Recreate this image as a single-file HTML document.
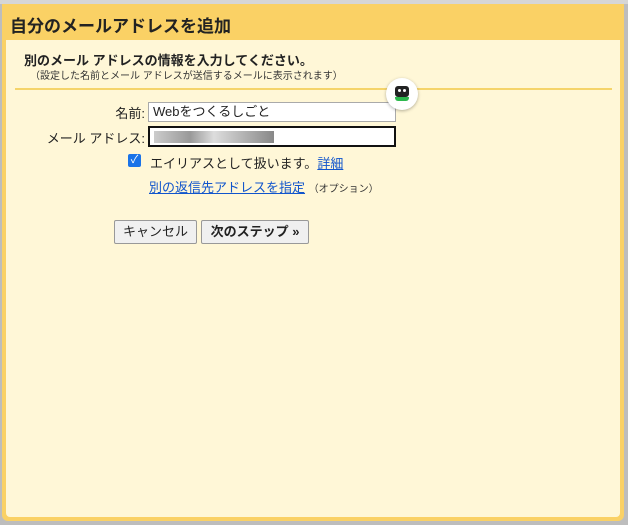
<!DOCTYPE html>
<html><head><meta charset="utf-8"><style>
body{margin:0;width:628px;height:525px;background:#bdbdbd;position:relative;overflow:hidden;font-family:"Liberation Sans","Noto Sans CJK JP",sans-serif;color:#222}
.top{position:absolute;left:0;top:0;width:628px;height:4px;background:#d6d6d6}
.dlg{position:absolute;left:2px;top:4px;width:622px;height:517px;background:#fad165;border-radius:0 0 6px 6px}
.in{position:absolute;left:4px;top:36px;width:614px;height:477px;background:#fff7d7;border-radius:0 0 4px 4px}
.h{position:absolute;left:10px;top:12px;font-size:17px;font-weight:bold;color:#222}
.t1{position:absolute;left:24px;top:50px;font-size:13px;font-weight:bold}
.t2{position:absolute;left:30px;top:67px;font-size:10px;color:#333}
.hr{position:absolute;left:15px;top:88px;width:597px;height:2px;background:#f5d46a}
.lbl{position:absolute;font-size:13px;text-align:right;width:145px;left:0}
.inp{position:absolute;left:148px;width:242px;height:18px;background:#fff;border:1px solid #aaa;font-size:13px;line-height:18px;padding-left:4px;box-sizing:content-box}
a{color:#15c;text-decoration:underline}
.btn{position:absolute;top:220px;height:22px;border:1px solid #999;border-radius:2px;background:#f0f0f0;font-size:13px;line-height:22px;text-align:center}
</style></head><body>
<div class="top"></div>
<div class="dlg"><div class="in"></div></div>
<div class="h">自分のメールアドレスを追加</div>
<div class="t1">別のメール アドレスの情報を入力してください。</div>
<div class="t2">（設定した名前とメール アドレスが送信するメールに表示されます）</div>
<div class="hr"></div>
<div class="lbl" style="top:103px">名前:</div>
<div class="inp" style="top:102px;">Webをつくるしごと</div>
<div class="lbl" style="top:128px">メール アドレス:</div>
<div class="inp" style="top:126px;border:2px solid #111;width:240px;height:17px;left:148px"><span style="display:inline-block;width:120px;height:12px;margin-top:3px;background:linear-gradient(90deg,#ccc,#999 30%,#ddd 50%,#bbb 70%,#888)"></span></div>
<div style="position:absolute;left:128px;top:154px;width:13px;height:13px;background:#1a73e8;border-radius:2px;color:#fff;font-size:11px;line-height:13px;text-align:center">✓</div>
<div style="position:absolute;left:150px;top:153px;font-size:13px">エイリアスとして扱います。<a>詳細</a></div>
<div style="position:absolute;left:149px;top:177px;font-size:13px"><a>別の返信先アドレスを指定</a> <span style="font-size:10px;color:#333">（オプション）</span></div>
<div class="btn" style="left:114px;width:81px">キャンセル</div>
<div class="btn" style="left:201px;width:106px;font-weight:bold">次のステップ »</div>
<div style="position:absolute;left:386px;top:78px;width:32px;height:32px;border-radius:50%;background:#fff;box-shadow:0 1px 3px rgba(0,0,0,.3)">
<div style="position:absolute;left:9px;top:8px;width:14px;height:11px;background:#222;border-radius:3px"></div>
<div style="position:absolute;left:12px;top:11px;width:3px;height:3px;background:#fff;border-radius:50%"></div>
<div style="position:absolute;left:17px;top:11px;width:3px;height:3px;background:#fff;border-radius:50%"></div>
<div style="position:absolute;left:9px;top:19px;width:14px;height:4px;background:#2db84d;border-radius:0 0 3px 3px"></div>
</div>
</body></html>
